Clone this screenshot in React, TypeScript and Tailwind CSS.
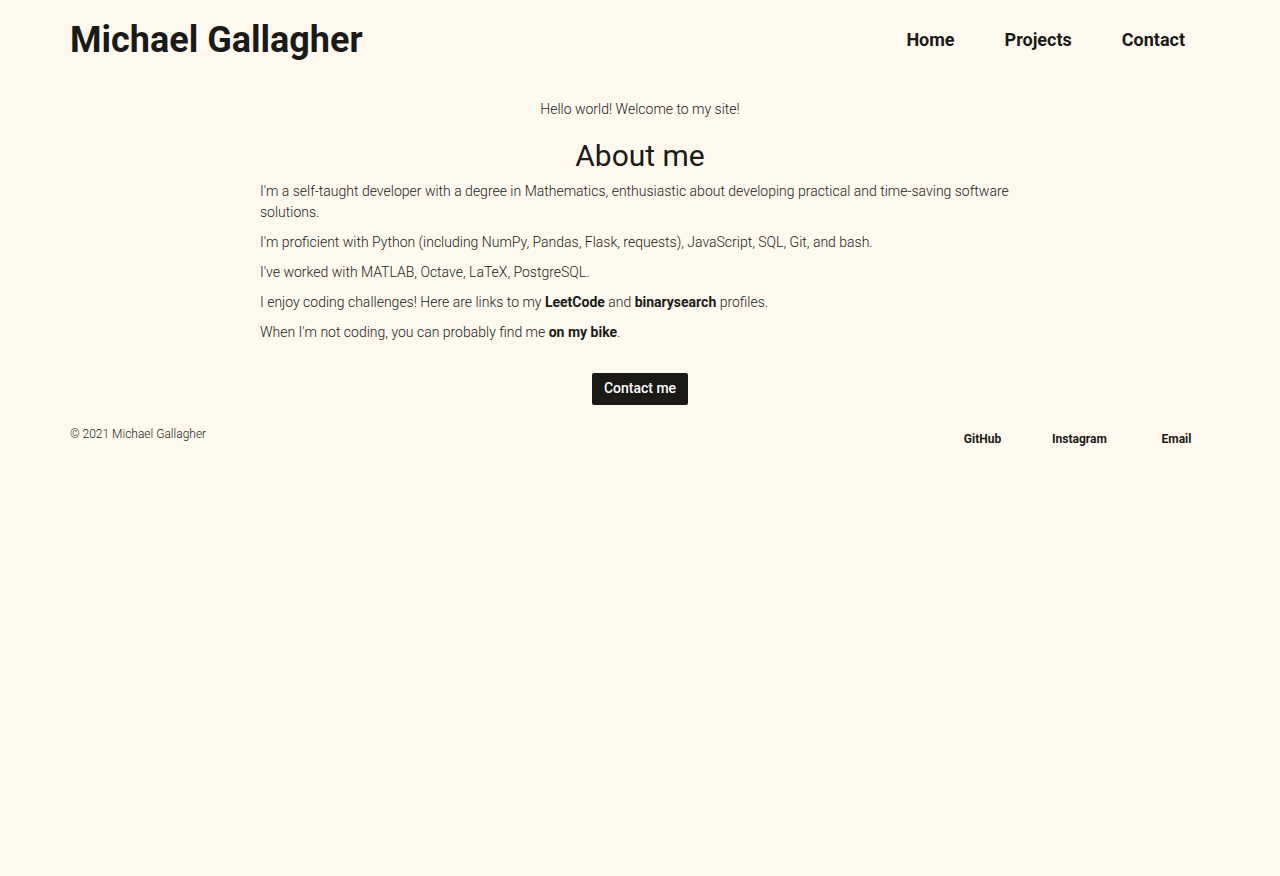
export default function App() {
  return (
    <div className="min-h-[876px] bg-[#fef9ee] text-[#1b1a17]" style={{ fontFamily: "Roboto, 'Noto Sans', sans-serif" }}>
      <header className="flex h-[80px] items-center justify-between px-[70px]">
        <h1 className="text-[36px] font-bold leading-[44px]">Michael Gallagher</h1>
        <nav className="flex items-center text-[18px] font-bold leading-[22px]">
          <a className="px-[25px]">Home</a>
          <a className="px-[25px]">Projects</a>
          <a className="px-[25px]">Contact</a>
        </nav>
      </header>
      <main className="flex flex-col items-center">
        <p className="mt-[19px] text-[14px] font-light leading-[20px]">Hello world! Welcome to my site!</p>
        <h2 className="mt-[19px] text-[30px] font-normal leading-[36px]">About me</h2>
        <div className="mt-[7px] w-[760px] text-[14px] font-light leading-[21px]">
          <p className="mb-[9px]">I'm a self-taught developer with a degree in Mathematics, enthusiastic about developing practical and time-saving software solutions.</p>
          <p className="mb-[9px]">I'm proficient with Python (including NumPy, Pandas, Flask, requests), JavaScript, SQL, Git, and bash.</p>
          <p className="mb-[9px]">I've worked with MATLAB, Octave, LaTeX, PostgreSQL.</p>
          <p className="mb-[9px]">I enjoy coding challenges! Here are links to my <b className="font-bold">LeetCode</b> and <b className="font-bold">binarysearch</b> profiles.</p>
          <p className="mb-[9px]">When I'm not coding, you can probably find me <b className="font-bold">on my bike</b>.</p>
        </div>
        <button className="mt-[21px] flex h-[32px] w-[96px] items-center justify-center rounded-[2px] bg-[#1b1a17] pb-[2px] text-[14px] font-medium text-white">Contact me</button>
      </main>
      <footer className="mt-[19px] flex items-start justify-between pl-[70px] pr-[55px]">
        <p className="text-[12px] font-light leading-[20px]">© 2021 Michael Gallagher</p>
        <div className="mt-[5px] flex text-[12px] font-bold leading-[20px]">
          <a className="w-[97px] text-center">GitHub</a>
          <a className="w-[97px] text-center">Instagram</a>
          <a className="w-[97px] text-center">Email</a>
        </div>
      </footer>
    </div>
  );
}
